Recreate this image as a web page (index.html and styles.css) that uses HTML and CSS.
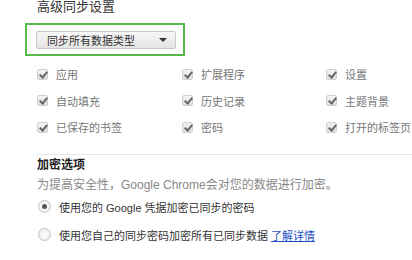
FILE: index.html
```html
<!DOCTYPE html>
<html lang="zh-CN">
<head>
    <meta charset="UTF-8">
    <title>高级同步设置</title>
    <link rel="stylesheet" href="styles.css">
</head>
<body>
    <div class="sync-page">
        <h3 class="sync-title">高级同步设置</h3>

        <div class="sync-select-wrap">
            <div class="sync-select">
                <span>同步所有数据类型</span>
                <span class="sync-arrow"></span>
            </div>
        </div>

        <div class="data-types">
            <label class="data-item"><span class="check"></span>应用</label>
            <label class="data-item"><span class="check"></span>扩展程序</label>
            <label class="data-item"><span class="check"></span>设置</label>
            <label class="data-item"><span class="check"></span>自动填充</label>
            <label class="data-item"><span class="check"></span>历史记录</label>
            <label class="data-item"><span class="check"></span>主题背景</label>
            <label class="data-item"><span class="check"></span>已保存的书签</label>
            <label class="data-item"><span class="check"></span>密码</label>
            <label class="data-item"><span class="check"></span>打开的标签页</label>
        </div>

        <div class="encrypt">
            <h4 class="encrypt-title">加密选项</h4>
            <p class="encrypt-note">为提高安全性，Google Chrome会对您的数据进行加密。</p>
            <label class="radio-item"><span class="radio selected"></span>使用您的 Google 凭据加密已同步的密码</label>
            <label class="radio-item"><span class="radio"></span>使用您自己的同步密码加密所有已同步数据 <a href="#">了解详情</a></label>
        </div>
    </div>
</body>
</html>
```

FILE: styles.css
```css
body {
    margin: 0;
    padding: 0;
    background: #ffffff;
    font-family: "Liberation Sans", "Noto Sans CJK SC", sans-serif;
    font-size: 12px;
    color: #333333;
}

.sync-page {
    padding-left: 37px;
}

.sync-title {
    margin: -2px 0 0;
    font-size: 13px;
    font-weight: normal;
    line-height: 18px;
    color: #333333;
}

.sync-select-wrap {
    width: 147px;
    height: 29px;
    margin: 7px 0 0 -12px;
    padding: 0 0 0 9px;
    border: 2px solid #56b94a;
    display: flex;
    align-items: center;
}

.sync-select {
    width: 140px;
    height: 18px;
    box-sizing: border-box;
    border: 1px solid #c8c8c8;
    border-radius: 2px;
    background: linear-gradient(#f7f7f7, #e4e4e4);
    display: flex;
    align-items: center;
    justify-content: space-between;
    padding: 0 8px 0 10px;
    font-size: 11px;
    color: #333333;
}

.sync-arrow {
    width: 0;
    height: 0;
    border-left: 4px solid transparent;
    border-right: 4px solid transparent;
    border-top: 4px solid #333333;
}

.data-types {
    display: grid;
    grid-template-columns: 145px 144px 1fr;
    grid-auto-rows: 26.5px;
    margin-top: 5px;
}

.data-item {
    display: flex;
    align-items: center;
    white-space: nowrap;
    font-size: 11px;
    color: #777777;
}

.check {
    flex: none;
    width: 11px;
    height: 11px;
    box-sizing: border-box;
    border: 1px solid #cfcfcf;
    border-radius: 2px;
    background: linear-gradient(#f4f4f4, #dedede);
    margin-right: 8px;
    position: relative;
}

.check::after {
    content: "";
    position: absolute;
    left: 3px;
    top: 0;
    width: 3px;
    height: 6px;
    border-right: 2px solid #666666;
    border-bottom: 2px solid #666666;
    transform: rotate(40deg);
}

.encrypt {
    margin-top: 13px;
    padding-top: 1px;
    border-top: 1px solid #e6e6e6;
}

.encrypt-title {
    margin: 0;
    font-size: 12px;
    font-weight: bold;
    line-height: 18px;
    color: #222222;
}

.encrypt-note {
    margin: 2px 0 0;
    line-height: 18px;
    color: #888888;
}

.radio-item {
    display: flex;
    align-items: center;
    height: 26px;
    padding-left: 1px;
    font-size: 11px;
    color: #333333;
}

.radio-item + .radio-item {
    margin-top: 2px;
}

.radio {
    flex: none;
    width: 13px;
    height: 13px;
    box-sizing: border-box;
    border: 1px solid #c4c4c4;
    border-radius: 50%;
    background: radial-gradient(#ffffff, #e8e8e8);
    margin-right: 8px;
    display: flex;
    align-items: center;
    justify-content: center;
}

.radio.selected::after {
    content: "";
    width: 5px;
    height: 5px;
    border-radius: 50%;
    background: #555555;
}

.radio-item a {
    color: #1a4ec2;
    text-decoration: underline;
    margin-left: 3px;
}
```
